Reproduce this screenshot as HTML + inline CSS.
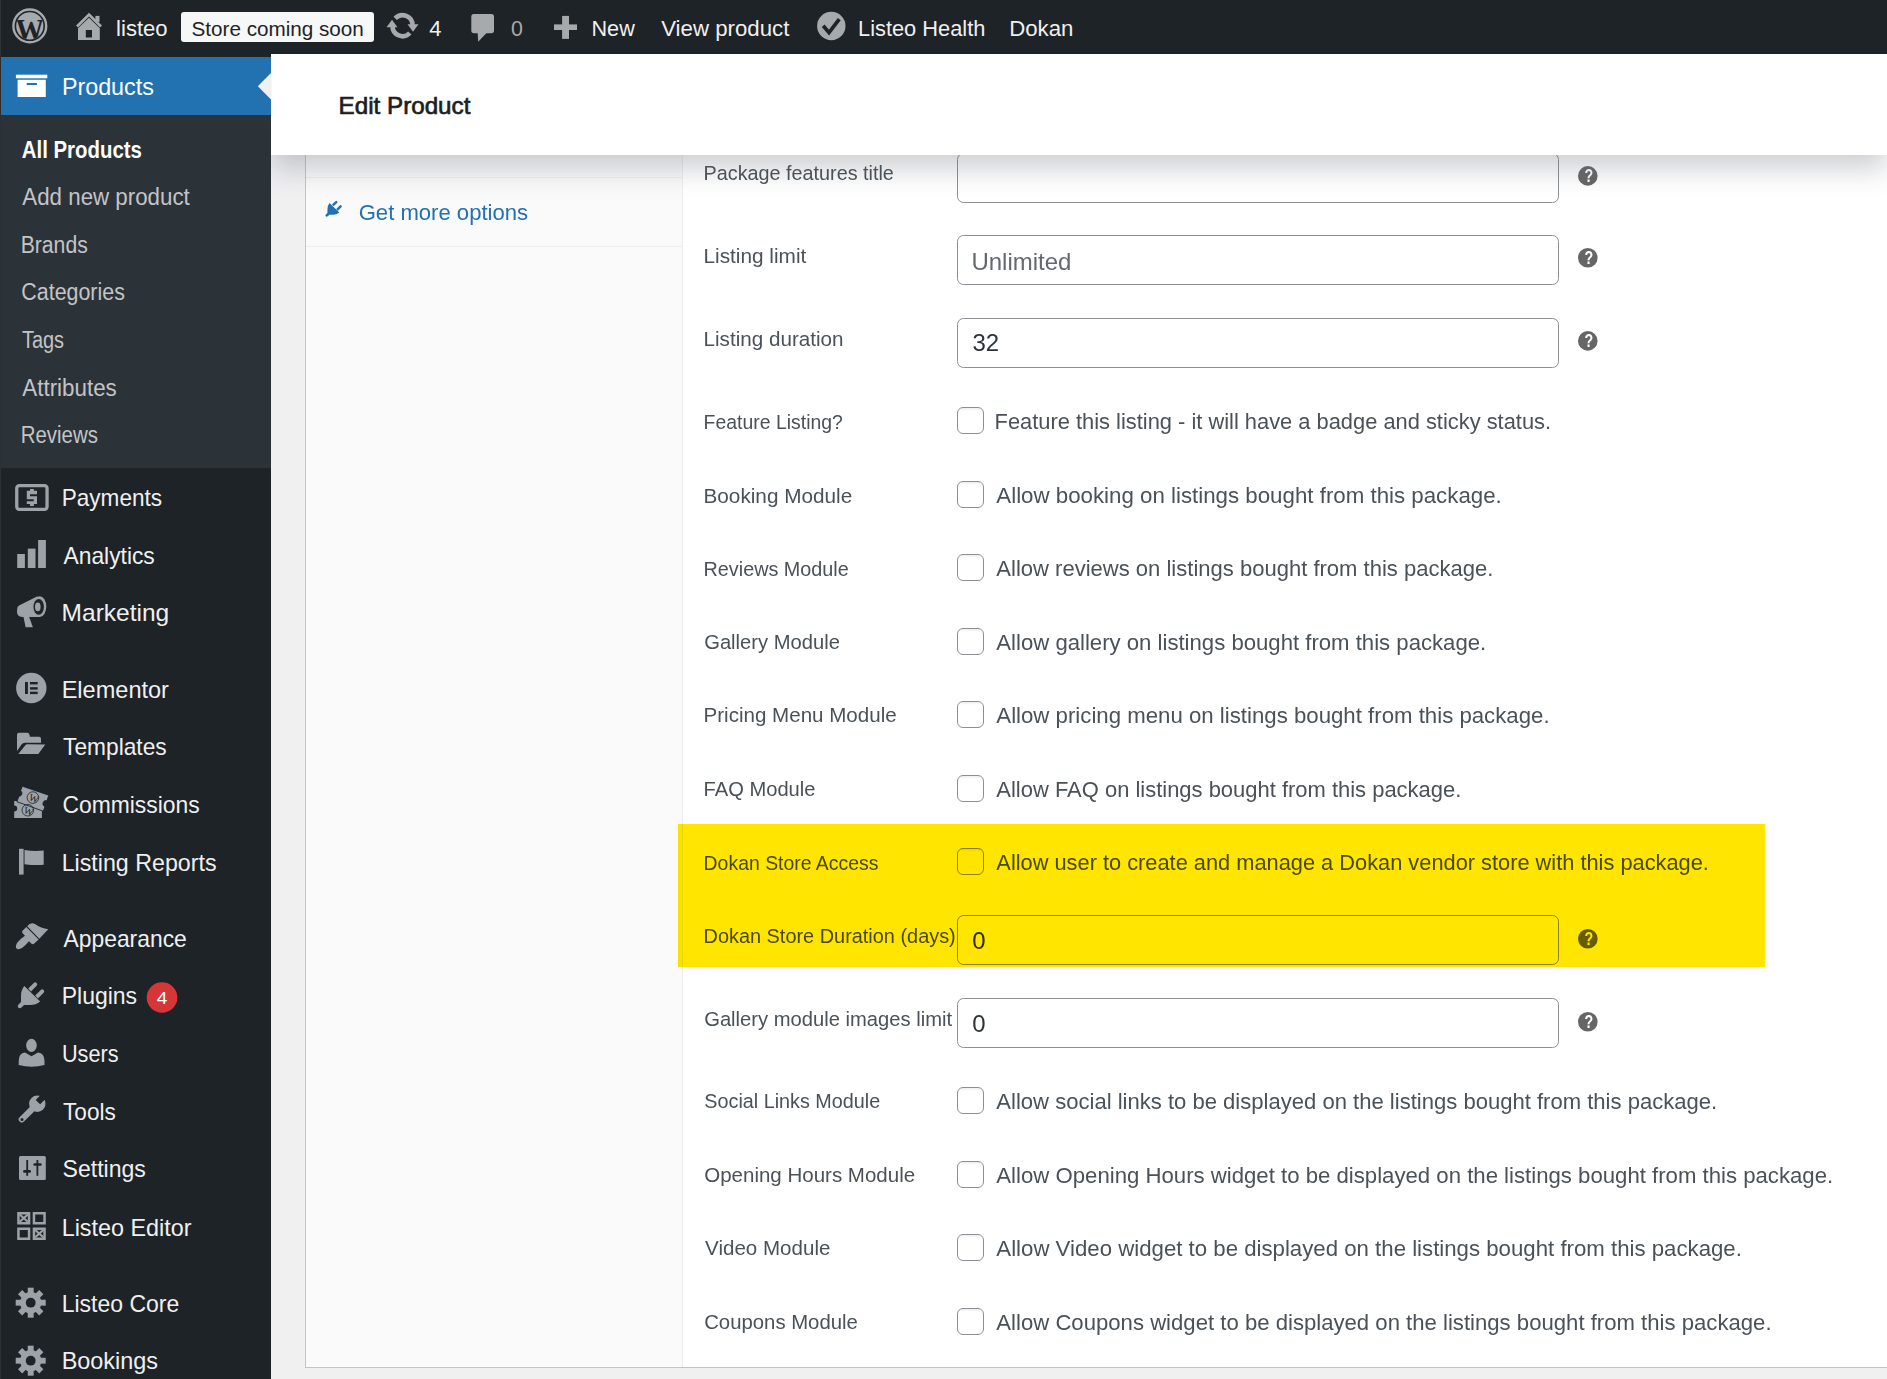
<!DOCTYPE html>
<html><head><meta charset="utf-8"><style>
html,body{margin:0;padding:0;background:#f0f0f1;width:1887px;height:1379px;overflow:hidden}
svg{position:absolute;left:0;top:0;display:block}
text{font-family:"Liberation Sans",sans-serif}
#hdr{position:absolute;left:271px;top:54px;width:1616px;height:101px;background:#fff;box-shadow:0 13.5px 27px rgba(85,93,102,.3);z-index:2}
</style></head><body>
<svg width="1887" height="1379" style="z-index:1">
<defs><linearGradient id="cbsh" x1="0" y1="0" x2="0" y2="1"><stop offset="0" stop-color="#000" stop-opacity="0.07"/><stop offset="1" stop-color="#000" stop-opacity="0"/></linearGradient></defs>
<rect x="305.5" y="100.5" width="1700" height="1267" fill="#fff" stroke="#c3c4c7" stroke-width="1"/>
<rect x="306" y="101" width="376" height="1266" fill="#fafafa"/>
<line x1="682.5" y1="101" x2="682.5" y2="1367" stroke="#eeeeee" stroke-width="1"/>
<line x1="306" y1="177.5" x2="682" y2="177.5" stroke="#eeeeee" stroke-width="1"/>
<line x1="306" y1="246.5" x2="682" y2="246.5" stroke="#eeeeee" stroke-width="1"/>
<text x="358.70" y="219.50" font-size="22" fill="#2271b1" textLength="169.39" lengthAdjust="spacingAndGlyphs">Get more options</text>
<path transform="translate(325.6,200.4) scale(0.62)" d="M6.3,4.2 L22.2,19.7 Q18,23.2 12,23.2 L6,23.2 L3.5,25.7 Q1.5,27.2 0.2,25.7 Q-1,24.2 0.5,22.7 L3,20.2 L3,14.2 Q3,8.2 6.3,4.2 Z M10.2,6.8 L15.8,1.2 Q17.2,-0.2 18.6,1.2 Q20,2.6 18.6,4 L13,9.6 Z M17.2,13.8 L22.8,8.2 Q24.2,6.8 25.6,8.2 Q27,9.6 25.6,11 L20,16.6 Z" fill="#2271b1"/>
<rect x="957.5" y="153.5" width="601" height="49" rx="6" fill="#fff" stroke="#8c8f94" stroke-width="1"/>
<text x="703.57" y="180.30" font-size="20.5" fill="#4a5158" textLength="190.31" lengthAdjust="spacingAndGlyphs">Package features title</text>
<circle cx="1587.8" cy="175.9" r="9.8" fill="#666"/>
<text x="1584.42" y="182.20" font-size="17.5" font-weight="bold" fill="#fff" textLength="8.71" lengthAdjust="spacingAndGlyphs">?</text>
<rect x="957.5" y="235.5" width="601" height="49" rx="6" fill="#fff" stroke="#8c8f94" stroke-width="1"/>
<text x="703.49" y="263.40" font-size="20.5" fill="#4a5158" textLength="102.79" lengthAdjust="spacingAndGlyphs">Listing limit</text>
<text x="971.44" y="269.80" font-size="24" fill="#646970" textLength="100.03" lengthAdjust="spacingAndGlyphs">Unlimited</text>
<circle cx="1587.8" cy="257.8" r="9.8" fill="#666"/>
<text x="1584.42" y="264.10" font-size="17.5" font-weight="bold" fill="#fff" textLength="8.71" lengthAdjust="spacingAndGlyphs">?</text>
<rect x="957.5" y="318.5" width="601" height="49" rx="6" fill="#fff" stroke="#8c8f94" stroke-width="1"/>
<text x="703.50" y="346.00" font-size="20.5" fill="#4a5158" textLength="140.05" lengthAdjust="spacingAndGlyphs">Listing duration</text>
<text x="972.40" y="351.40" font-size="24" fill="#2c3338" textLength="26.70" lengthAdjust="spacingAndGlyphs">32</text>
<circle cx="1587.8" cy="340.9" r="9.8" fill="#666"/>
<text x="1584.42" y="347.20" font-size="17.5" font-weight="bold" fill="#fff" textLength="8.71" lengthAdjust="spacingAndGlyphs">?</text>
<rect x="957.5" y="915.5" width="601" height="49" rx="6" fill="#fff" stroke="#8c8f94" stroke-width="1"/>
<text x="703.56" y="943.00" font-size="20.5" fill="#4a5158" textLength="252.19" lengthAdjust="spacingAndGlyphs">Dokan Store Duration (days)</text>
<text x="972.34" y="949.30" font-size="24" fill="#2c3338" textLength="13.35" lengthAdjust="spacingAndGlyphs">0</text>
<circle cx="1587.8" cy="938.8" r="9.8" fill="#666"/>
<text x="1584.42" y="945.10" font-size="17.5" font-weight="bold" fill="#fff" textLength="8.71" lengthAdjust="spacingAndGlyphs">?</text>
<rect x="957.5" y="998.5" width="601" height="49" rx="6" fill="#fff" stroke="#8c8f94" stroke-width="1"/>
<text x="704.19" y="1026.00" font-size="20.5" fill="#4a5158" textLength="247.95" lengthAdjust="spacingAndGlyphs">Gallery module images limit</text>
<text x="972.34" y="1032.00" font-size="24" fill="#2c3338" textLength="13.35" lengthAdjust="spacingAndGlyphs">0</text>
<circle cx="1587.8" cy="1021.8" r="9.8" fill="#666"/>
<text x="1584.42" y="1028.10" font-size="17.5" font-weight="bold" fill="#fff" textLength="8.71" lengthAdjust="spacingAndGlyphs">?</text>
<rect x="957.5" y="407.5" width="26" height="26" rx="5.5" fill="#fff" stroke="#8c8f94" stroke-width="1"/>
<rect x="961" y="408" width="19" height="3" fill="url(#cbsh)"/>
<text x="703.60" y="428.50" font-size="20.5" fill="#4a5158" textLength="139.31" lengthAdjust="spacingAndGlyphs">Feature Listing?</text>
<text x="994.60" y="429.00" font-size="22.4" fill="#4a5158" textLength="556.47" lengthAdjust="spacingAndGlyphs">Feature this listing - it will have a badge and sticky status.</text>
<rect x="957.5" y="481.5" width="26" height="26" rx="5.5" fill="#fff" stroke="#8c8f94" stroke-width="1"/>
<rect x="961" y="482" width="19" height="3" fill="url(#cbsh)"/>
<text x="703.49" y="502.50" font-size="20.5" fill="#4a5158" textLength="148.73" lengthAdjust="spacingAndGlyphs">Booking Module</text>
<text x="996.34" y="503.00" font-size="22.4" fill="#4a5158" textLength="505.47" lengthAdjust="spacingAndGlyphs">Allow booking on listings bought from this package.</text>
<rect x="957.5" y="554.5" width="26" height="26" rx="5.5" fill="#fff" stroke="#8c8f94" stroke-width="1"/>
<rect x="961" y="555" width="19" height="3" fill="url(#cbsh)"/>
<text x="703.57" y="575.60" font-size="20.5" fill="#4a5158" textLength="145.21" lengthAdjust="spacingAndGlyphs">Reviews Module</text>
<text x="996.34" y="576.10" font-size="22.4" fill="#4a5158" textLength="497.03" lengthAdjust="spacingAndGlyphs">Allow reviews on listings bought from this package.</text>
<rect x="957.5" y="628.5" width="26" height="26" rx="5.5" fill="#fff" stroke="#8c8f94" stroke-width="1"/>
<rect x="961" y="629" width="19" height="3" fill="url(#cbsh)"/>
<text x="704.19" y="649.30" font-size="20.5" fill="#4a5158" textLength="135.67" lengthAdjust="spacingAndGlyphs">Gallery Module</text>
<text x="996.34" y="649.80" font-size="22.4" fill="#4a5158" textLength="489.87" lengthAdjust="spacingAndGlyphs">Allow gallery on listings bought from this package.</text>
<rect x="957.5" y="701.5" width="26" height="26" rx="5.5" fill="#fff" stroke="#8c8f94" stroke-width="1"/>
<rect x="961" y="702" width="19" height="3" fill="url(#cbsh)"/>
<text x="703.50" y="722.40" font-size="20.5" fill="#4a5158" textLength="193.20" lengthAdjust="spacingAndGlyphs">Pricing Menu Module</text>
<text x="996.34" y="722.90" font-size="22.4" fill="#4a5158" textLength="553.26" lengthAdjust="spacingAndGlyphs">Allow pricing menu on listings bought from this package.</text>
<rect x="957.5" y="775.5" width="26" height="26" rx="5.5" fill="#fff" stroke="#8c8f94" stroke-width="1"/>
<rect x="961" y="776" width="19" height="3" fill="url(#cbsh)"/>
<text x="703.54" y="796.40" font-size="20.5" fill="#4a5158" textLength="111.93" lengthAdjust="spacingAndGlyphs">FAQ Module</text>
<text x="996.35" y="796.90" font-size="22.4" fill="#4a5158" textLength="464.94" lengthAdjust="spacingAndGlyphs">Allow FAQ on listings bought from this package.</text>
<rect x="957.5" y="848.5" width="26" height="26" rx="5.5" fill="#fff" stroke="#8c8f94" stroke-width="1"/>
<rect x="961" y="849" width="19" height="3" fill="url(#cbsh)"/>
<text x="703.60" y="869.50" font-size="20.5" fill="#4a5158" textLength="174.87" lengthAdjust="spacingAndGlyphs">Dokan Store Access</text>
<text x="996.35" y="870.00" font-size="22.4" fill="#4a5158" textLength="712.54" lengthAdjust="spacingAndGlyphs">Allow user to create and manage a Dokan vendor store with this package.</text>
<rect x="957.5" y="1087.5" width="26" height="26" rx="5.5" fill="#fff" stroke="#8c8f94" stroke-width="1"/>
<rect x="961" y="1088" width="19" height="3" fill="url(#cbsh)"/>
<text x="704.31" y="1108.40" font-size="20.5" fill="#4a5158" textLength="175.96" lengthAdjust="spacingAndGlyphs">Social Links Module</text>
<text x="996.34" y="1108.90" font-size="22.4" fill="#4a5158" textLength="720.86" lengthAdjust="spacingAndGlyphs">Allow social links to be displayed on the listings bought from this package.</text>
<rect x="957.5" y="1161.5" width="26" height="26" rx="5.5" fill="#fff" stroke="#8c8f94" stroke-width="1"/>
<rect x="961" y="1162" width="19" height="3" fill="url(#cbsh)"/>
<text x="704.23" y="1182.30" font-size="20.5" fill="#4a5158" textLength="210.88" lengthAdjust="spacingAndGlyphs">Opening Hours Module</text>
<text x="996.34" y="1182.80" font-size="22.4" fill="#4a5158" textLength="836.86" lengthAdjust="spacingAndGlyphs">Allow Opening Hours widget to be displayed on the listings bought from this package.</text>
<rect x="957.5" y="1234.5" width="26" height="26" rx="5.5" fill="#fff" stroke="#8c8f94" stroke-width="1"/>
<rect x="961" y="1235" width="19" height="3" fill="url(#cbsh)"/>
<text x="705.10" y="1255.40" font-size="20.5" fill="#4a5158" textLength="125.33" lengthAdjust="spacingAndGlyphs">Video Module</text>
<text x="996.34" y="1255.90" font-size="22.4" fill="#4a5158" textLength="745.59" lengthAdjust="spacingAndGlyphs">Allow Video widget to be displayed on the listings bought from this package.</text>
<rect x="957.5" y="1308.5" width="26" height="26" rx="5.5" fill="#fff" stroke="#8c8f94" stroke-width="1"/>
<rect x="961" y="1309" width="19" height="3" fill="url(#cbsh)"/>
<text x="704.18" y="1329.30" font-size="20.5" fill="#4a5158" textLength="153.70" lengthAdjust="spacingAndGlyphs">Coupons Module</text>
<text x="996.34" y="1329.80" font-size="22.4" fill="#4a5158" textLength="775.24" lengthAdjust="spacingAndGlyphs">Allow Coupons widget to be displayed on the listings bought from this package.</text>
<rect x="678" y="824" width="1087" height="143" fill="#ffe500" style="mix-blend-mode:multiply"/>
</svg>
<div id="hdr"></div>
<svg width="1887" height="1379" style="z-index:3">
<text x="338.60" y="114.00" font-size="24.5" fill="#1e1e1e" stroke="#1e1e1e" stroke-width="0.7" textLength="131.78" lengthAdjust="spacingAndGlyphs">Edit Product</text>
<rect x="0" y="0" width="1887" height="54" fill="#1d2327"/>
<rect x="0" y="54" width="271" height="1325" fill="#1d2327"/>
<rect x="0" y="57" width="271" height="58" fill="#2271b1"/>
<rect x="0" y="115" width="271" height="353" fill="#2c3338"/>
<polygon points="271.5,72.6 257.8,86.3 271.5,100" fill="#f0f0f1"/>
<rect x="0" y="0" width="1" height="57" fill="#303438"/>
<rect x="0" y="57" width="1" height="58" fill="#302d2b"/>
<rect x="0" y="115" width="1" height="1264" fill="#2c3034"/>
<text x="116.11" y="36.20" font-size="22.5" fill="#f0f0f1" textLength="51.52" lengthAdjust="spacingAndGlyphs">listeo</text>
<rect x="181" y="12" width="193" height="30" rx="3" fill="#f6f7f7"/>
<text x="191.57" y="36.20" font-size="21" fill="#1d2327" textLength="172.29" lengthAdjust="spacingAndGlyphs">Store coming soon</text>
<text x="429.31" y="36.20" font-size="22.5" fill="#f0f0f1" textLength="12.22" lengthAdjust="spacingAndGlyphs">4</text>
<text x="510.95" y="36.20" font-size="22.5" fill="#a7aaad" textLength="11.88" lengthAdjust="spacingAndGlyphs">0</text>
<text x="591.52" y="36.20" font-size="22.5" fill="#f0f0f1" textLength="43.24" lengthAdjust="spacingAndGlyphs">New</text>
<text x="661.19" y="36.20" font-size="22.5" fill="#f0f0f1" textLength="128.19" lengthAdjust="spacingAndGlyphs">View product</text>
<text x="858.00" y="36.20" font-size="22.5" fill="#f0f0f1" textLength="127.37" lengthAdjust="spacingAndGlyphs">Listeo Health</text>
<text x="1009.16" y="36.20" font-size="22.5" fill="#f0f0f1" textLength="64.30" lengthAdjust="spacingAndGlyphs">Dokan</text>
<text x="61.88" y="94.80" font-size="24" fill="#fff" textLength="92.01" lengthAdjust="spacingAndGlyphs">Products</text>
<text x="21.79" y="158.00" font-size="23" font-weight="bold" fill="#fff" textLength="120.07" lengthAdjust="spacingAndGlyphs">All Products</text>
<text x="22.34" y="205.00" font-size="23" fill="#c3c4c7" textLength="167.43" lengthAdjust="spacingAndGlyphs">Add new product</text>
<text x="20.65" y="253.10" font-size="23" fill="#c3c4c7" textLength="67.11" lengthAdjust="spacingAndGlyphs">Brands</text>
<text x="21.33" y="299.70" font-size="23" fill="#c3c4c7" textLength="103.54" lengthAdjust="spacingAndGlyphs">Categories</text>
<text x="21.95" y="348.20" font-size="23" fill="#c3c4c7" textLength="42.14" lengthAdjust="spacingAndGlyphs">Tags</text>
<text x="22.34" y="395.70" font-size="23" fill="#c3c4c7" textLength="94.42" lengthAdjust="spacingAndGlyphs">Attributes</text>
<text x="20.71" y="442.50" font-size="23" fill="#c3c4c7" textLength="77.28" lengthAdjust="spacingAndGlyphs">Reviews</text>
<text x="61.74" y="505.70" font-size="24" fill="#f0f0f1" textLength="100.33" lengthAdjust="spacingAndGlyphs">Payments</text>
<text x="63.54" y="563.70" font-size="24" fill="#f0f0f1" textLength="91.23" lengthAdjust="spacingAndGlyphs">Analytics</text>
<text x="61.58" y="620.80" font-size="24" fill="#f0f0f1" textLength="107.67" lengthAdjust="spacingAndGlyphs">Marketing</text>
<text x="61.66" y="697.80" font-size="24" fill="#f0f0f1" textLength="107.30" lengthAdjust="spacingAndGlyphs">Elementor</text>
<text x="63.09" y="754.50" font-size="24" fill="#f0f0f1" textLength="103.61" lengthAdjust="spacingAndGlyphs">Templates</text>
<text x="62.46" y="812.90" font-size="24" fill="#f0f0f1" textLength="137.17" lengthAdjust="spacingAndGlyphs">Commissions</text>
<text x="61.68" y="870.50" font-size="24" fill="#f0f0f1" textLength="154.83" lengthAdjust="spacingAndGlyphs">Listing Reports</text>
<text x="63.54" y="947.00" font-size="24" fill="#f0f0f1" textLength="123.24" lengthAdjust="spacingAndGlyphs">Appearance</text>
<text x="61.70" y="1004.40" font-size="24" fill="#f0f0f1" textLength="75.40" lengthAdjust="spacingAndGlyphs">Plugins</text>
<text x="61.92" y="1061.90" font-size="24" fill="#f0f0f1" textLength="56.61" lengthAdjust="spacingAndGlyphs">Users</text>
<text x="63.09" y="1119.50" font-size="24" fill="#f0f0f1" textLength="52.69" lengthAdjust="spacingAndGlyphs">Tools</text>
<text x="62.56" y="1177.10" font-size="24" fill="#f0f0f1" textLength="83.26" lengthAdjust="spacingAndGlyphs">Settings</text>
<text x="61.67" y="1235.90" font-size="24" fill="#f0f0f1" textLength="129.91" lengthAdjust="spacingAndGlyphs">Listeo Editor</text>
<text x="61.70" y="1311.70" font-size="24" fill="#f0f0f1" textLength="117.51" lengthAdjust="spacingAndGlyphs">Listeo Core</text>
<text x="61.67" y="1368.90" font-size="24" fill="#f0f0f1" textLength="96.43" lengthAdjust="spacingAndGlyphs">Bookings</text>
<circle cx="162" cy="997.5" r="15.3" fill="#d63638"/>
<text x="156.67" y="1003.50" font-size="17" fill="#fff" textLength="10.68" lengthAdjust="spacingAndGlyphs">4</text>
<rect x="15.9" y="74.7" width="31.4" height="3.6" fill="#fff"/>
<path d="M17.6,79.7 H45.8 V97 H17.6 Z M26.7,83.1 V85 H36.9 V83.1 Z" fill="#fff" fill-rule="evenodd"/>
<rect x="16.75" y="485.65" width="30.3" height="23.7" rx="2.5" fill="none" stroke="#9ca2a7" stroke-width="3.3"/>
<path d="M30,489 H33.9 V490.8 H37 V494.2 H30 V496.3 H37 V504.1 H33.9 V506 H30 V504.1 H26.8 V501.2 H33.7 V499.2 H26.8 V490.8 H30 Z" fill="#9ca2a7"/>
<rect x="17.2" y="554" width="7.7" height="14" fill="#9ca2a7"/>
<rect x="27.8" y="548.6" width="7.7" height="19.4" fill="#9ca2a7"/>
<rect x="38.1" y="540" width="7.8" height="28" fill="#9ca2a7"/>
<path d="M17.2,609 Q17,606.5 19.5,605.3 L37.5,596.3 L40,617 L22,617 Q17.2,616.5 17,612 Z" fill="#9ca2a7"/>
<ellipse cx="39.7" cy="606.6" rx="6.6" ry="10.4" fill="#9ca2a7"/>
<ellipse cx="38.7" cy="606.8" rx="5.2" ry="7.9" fill="#1d2327"/>
<ellipse cx="37.8" cy="606.9" rx="2.8" ry="4.3" fill="#9ca2a7"/>
<path d="M23.3,616 L28.8,616 L32.9,627.2 L25.6,627.2 Z" fill="#9ca2a7"/>
<circle cx="31.3" cy="688" r="15.2" fill="#9ca2a7"/>
<rect x="25" y="682" width="2.9" height="12" fill="#1d2327"/>
<rect x="30" y="682" width="7.7" height="2.4" fill="#1d2327"/>
<rect x="30" y="687.2" width="7.7" height="2.4" fill="#1d2327"/>
<rect x="30" y="691.7" width="7.7" height="2.4" fill="#1d2327"/>
<path d="M17,751 L17,734.7 Q17,732.7 19,732.7 L27.3,732.7 Q29.1,732.7 29.5,734.7 L29.9,736.7 L39,736.7 Q41,736.7 41,738.7 L41,742.7 L25,742.7 Q22.8,742.7 21.5,744.4 Z" fill="#9ca2a7"/>
<path d="M18.3,754 L25.3,745.2 Q26,744.2 27.4,744.2 L45.3,744.6 L38.3,754 Z" fill="#9ca2a7"/>
<path d="M14.2,801 H41.9 V818 H14.2 V811.5 A3,3 0 0 0 14.2,805.5 Z" fill="#9ca2a7"/>
<path d="M22.3,786.2 L48.8,795.2 L46.9,800.8 A3,3 0 0 0 45.0,806.5 L43.3,811.2 L16.9,801.7 L18.9,796.3 A3,3 0 0 0 20.6,790.8 Z" fill="#9ca2a7" stroke="#1d2327" stroke-width="0.9"/>
<circle cx="32.9" cy="797.6" r="5.8" fill="none" stroke="#1d2327" stroke-width="0.8"/>
<text x="29.3" y="801.6" style="font-family:Liberation Serif" font-size="10" fill="#1d2327" transform="rotate(20 32.9 797.6)">W</text>
<circle cx="27.8" cy="810.2" r="5.8" fill="none" stroke="#1d2327" stroke-width="0.8"/>
<text x="24.2" y="814.2" style="font-family:Liberation Serif" font-size="10" fill="#1d2327" transform="rotate(20 27.8 810.2)">W</text>
<rect x="19" y="848.8" width="4.6" height="25.8" fill="#9ca2a7"/>
<path d="M24.5,850 Q34,851.5 43.7,850.5 V864.8 Q34,865.5 24.5,864.2 Z" fill="#9ca2a7"/>
<path d="M27.2,926.3 Q30.5,921.8 35,924 Q41,928.3 48.3,929.3 L39.3,938.8 Z" fill="#9ca2a7"/>
<path d="M26.3,927 L38.6,939.4 L34.3,943.6 Q33,944.8 31.2,943.5 L29,941.3 Q26,945 22,948 Q18.5,950 16.5,948.5 Q15,946.5 17,943 Q20,939 25,935.8 L22.8,933.5 Q21.5,932 22.5,930.8 Z" fill="#9ca2a7"/>
<path transform="translate(18,981.8)" d="M6.3,4.2 L22.2,19.7 Q18,23.2 12,23.2 L6,23.2 L3.5,25.7 Q1.5,27.2 0.2,25.7 Q-1,24.2 0.5,22.7 L3,20.2 L3,14.2 Q3,8.2 6.3,4.2 Z M10.2,6.8 L15.8,1.2 Q17.2,-0.2 18.6,1.2 Q20,2.6 18.6,4 L13,9.6 Z M17.2,13.8 L22.8,8.2 Q24.2,6.8 25.6,8.2 Q27,9.6 25.6,11 L20,16.6 Z" fill="#9ca2a7"/>
<ellipse cx="31.45" cy="1045.3" rx="5.3" ry="6.6" fill="#9ca2a7"/>
<path d="M18.7,1065 L18.7,1061 Q18.7,1053.2 25,1052.6 L31.5,1056.3 L38,1052.6 Q44.5,1053.2 44.5,1061 L44.5,1065 Q31.6,1068.6 18.7,1065 Z" fill="#9ca2a7"/>
<line x1="21.8" y1="1119.4" x2="34" y2="1107.2" stroke="#9ca2a7" stroke-width="6.2" stroke-linecap="round"/>
<circle cx="37.3" cy="1103.8" r="8.2" fill="#9ca2a7"/>
<polygon points="41.8,1093.8 35.7,1099.9 40.1,1104.3 46.2,1098.2" fill="#1d2327"/>
<circle cx="22" cy="1119.4" r="1.5" fill="#1d2327"/>
<rect x="19" y="1155.9" width="26.8" height="24.1" rx="1.5" fill="#9ca2a7"/>
<rect x="26.3" y="1160" width="1.8" height="15.8" fill="#1d2327"/>
<rect x="23.1" y="1170.1" width="7.9" height="2.6" rx="1.3" fill="#1d2327"/>
<rect x="36.5" y="1160" width="1.8" height="15.8" fill="#1d2327"/>
<rect x="33.4" y="1163.2" width="8.3" height="2.6" rx="1.3" fill="#1d2327"/>
<rect x="18.45" y="1213.25" width="10.6" height="10.0" fill="#1d2327" stroke="#9ca2a7" stroke-width="2.5"/>
<path d="M19.7,1214.5 L27.799999999999997,1221.7 M27.799999999999997,1214.5 L19.7,1221.7" stroke="#9ca2a7" stroke-width="2.2"/>
<rect x="33.95" y="1213.25" width="10.6" height="10.0" fill="#1d2327" stroke="#9ca2a7" stroke-width="2.5"/>
<rect x="18.45" y="1228.75" width="10.6" height="10.0" fill="#1d2327" stroke="#9ca2a7" stroke-width="2.5"/>
<rect x="33.95" y="1228.75" width="10.6" height="10.0" fill="#1d2327" stroke="#9ca2a7" stroke-width="2.5"/>
<path d="M35.2,1230.0 L43.300000000000004,1237.2 M43.300000000000004,1230.0 L35.2,1237.2" stroke="#9ca2a7" stroke-width="2.2"/>
<circle cx="30.7" cy="1302.7" r="10.6" fill="#9ca2a7"/>
<rect x="27.75" y="1287.70" width="5.9" height="6.4" fill="#9ca2a7" transform="rotate(0 30.7 1302.7)"/>
<rect x="27.75" y="1287.70" width="5.9" height="6.4" fill="#9ca2a7" transform="rotate(45 30.7 1302.7)"/>
<rect x="27.75" y="1287.70" width="5.9" height="6.4" fill="#9ca2a7" transform="rotate(90 30.7 1302.7)"/>
<rect x="27.75" y="1287.70" width="5.9" height="6.4" fill="#9ca2a7" transform="rotate(135 30.7 1302.7)"/>
<rect x="27.75" y="1287.70" width="5.9" height="6.4" fill="#9ca2a7" transform="rotate(180 30.7 1302.7)"/>
<rect x="27.75" y="1287.70" width="5.9" height="6.4" fill="#9ca2a7" transform="rotate(225 30.7 1302.7)"/>
<rect x="27.75" y="1287.70" width="5.9" height="6.4" fill="#9ca2a7" transform="rotate(270 30.7 1302.7)"/>
<rect x="27.75" y="1287.70" width="5.9" height="6.4" fill="#9ca2a7" transform="rotate(315 30.7 1302.7)"/>
<circle cx="30.7" cy="1302.7" r="4.9" fill="#1d2327"/>
<circle cx="30.7" cy="1360.7" r="10.6" fill="#9ca2a7"/>
<rect x="27.75" y="1345.70" width="5.9" height="6.4" fill="#9ca2a7" transform="rotate(0 30.7 1360.7)"/>
<rect x="27.75" y="1345.70" width="5.9" height="6.4" fill="#9ca2a7" transform="rotate(45 30.7 1360.7)"/>
<rect x="27.75" y="1345.70" width="5.9" height="6.4" fill="#9ca2a7" transform="rotate(90 30.7 1360.7)"/>
<rect x="27.75" y="1345.70" width="5.9" height="6.4" fill="#9ca2a7" transform="rotate(135 30.7 1360.7)"/>
<rect x="27.75" y="1345.70" width="5.9" height="6.4" fill="#9ca2a7" transform="rotate(180 30.7 1360.7)"/>
<rect x="27.75" y="1345.70" width="5.9" height="6.4" fill="#9ca2a7" transform="rotate(225 30.7 1360.7)"/>
<rect x="27.75" y="1345.70" width="5.9" height="6.4" fill="#9ca2a7" transform="rotate(270 30.7 1360.7)"/>
<rect x="27.75" y="1345.70" width="5.9" height="6.4" fill="#9ca2a7" transform="rotate(315 30.7 1360.7)"/>
<circle cx="30.7" cy="1360.7" r="4.9" fill="#1d2327"/>
<circle cx="29.8" cy="25.9" r="16.4" fill="none" stroke="#a7aaad" stroke-width="2.4"/>
<circle cx="29.8" cy="25.9" r="13.6" fill="#a7aaad"/>
<clipPath id="wpc"><circle cx="29.8" cy="25.9" r="13.6"/></clipPath>
<g clip-path="url(#wpc)"><text x="15.6" y="40.6" style="font-family:Liberation Serif" font-weight="bold" font-size="31" fill="#1d2327" textLength="28.4" lengthAdjust="spacingAndGlyphs">W</text></g>
<path d="M89,12.7 L102,25.6 L100,27.6 L89,16.6 L78,27.6 L76,25.6 Z" fill="#a7aaad"/>
<rect x="95.4" y="15.9" width="4.1" height="6" fill="#a7aaad"/>
<path d="M78,28.3 L89,17.8 L99.8,28.3 V40 H78 Z M85.8,29.9 V37.5 H92 V29.9 Z" fill="#a7aaad" fill-rule="evenodd"/>
<path d="M395.2,18.4 A10,10 0 0 1 412.5,25.5" fill="none" stroke="#a7aaad" stroke-width="4.6"/>
<polygon points="407.5,24.3 418.5,24.3 413,31.8" fill="#a7aaad"/>
<path d="M409.8,33 A10,10 0 0 1 392.5,26" fill="none" stroke="#a7aaad" stroke-width="4.6"/>
<polygon points="386.5,27.2 397.5,27.2 392,19.7" fill="#a7aaad"/>
<rect x="471.3" y="13.9" width="22.7" height="19.3" rx="2.6" fill="#a7aaad"/>
<polygon points="477.6,32 478.2,41.7 487.5,32" fill="#a7aaad"/>
<rect x="562.1" y="15.9" width="6.9" height="23" fill="#a7aaad"/>
<rect x="554" y="24.4" width="23" height="5.6" fill="#a7aaad"/>
<circle cx="831.3" cy="26" r="14.2" fill="#a7aaad"/>
<polyline points="823.2,25.8 829,32.6 839.3,19.2" fill="none" stroke="#1d2327" stroke-width="3.7" stroke-linejoin="miter"/>
</svg>
</body></html>
